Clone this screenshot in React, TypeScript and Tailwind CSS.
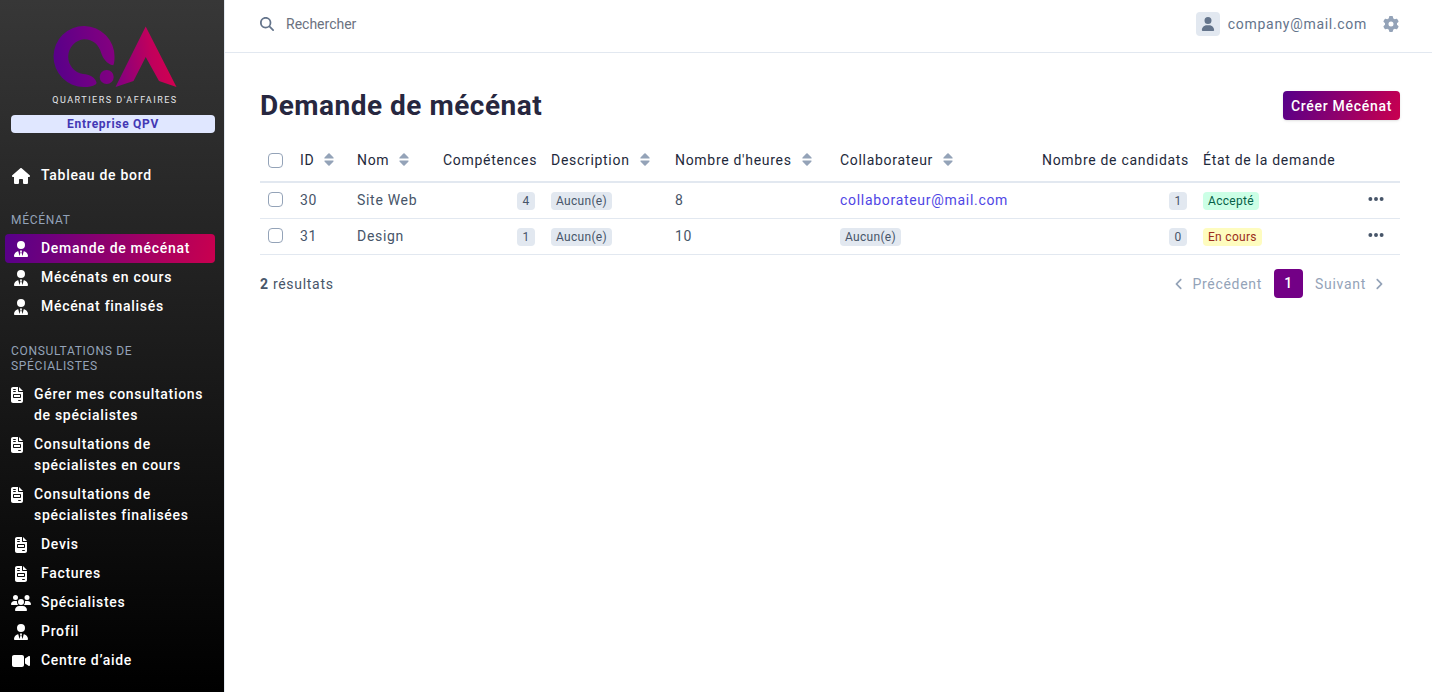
import type { ReactNode } from 'react';
import type { IconType } from 'react-icons';
import {
  FaAngleLeft,
  FaAngleRight,
  FaEllipsis,
  FaFileInvoice,
  FaGear,
  FaHouse,
  FaMagnifyingGlass,
  FaUser,
  FaUserTie,
  FaUsers,
  FaVideo,
} from 'react-icons/fa6';

type MenuItem = { label: string; icon: IconType; iconClass?: string; active?: boolean; long?: boolean };
type MenuSection = { title?: string; items: MenuItem[] };

const menu: MenuSection[] = [
  { items: [{ label: 'Tableau de bord', icon: FaHouse, iconClass: 'size-[18px]' }] },
  {
    title: 'Mécénat',
    items: [
      { label: 'Demande de mécénat', icon: FaUserTie, active: true },
      { label: 'Mécénats en cours', icon: FaUserTie },
      { label: 'Mécénat finalisés', icon: FaUserTie },
    ],
  },
  {
    title: 'Consultations de spécialistes',
    items: [
      { label: 'Gérer mes consultations de spécialistes', icon: FaFileInvoice, long: true },
      { label: 'Consultations de spécialistes en cours', icon: FaFileInvoice, long: true },
      { label: 'Consultations de spécialistes finalisées', icon: FaFileInvoice, long: true },
      { label: 'Devis', icon: FaFileInvoice },
      { label: 'Factures', icon: FaFileInvoice },
      { label: 'Spécialistes', icon: FaUsers, iconClass: 'size-5' },
      { label: 'Profil', icon: FaUserTie },
      { label: 'Centre d’aide', icon: FaVideo, iconClass: 'size-[18px]' },
    ],
  },
];

const columns = [
  { label: 'ID', sortable: true, width: 'w-[57px]' },
  { label: 'Nom', sortable: true, width: 'w-[86px]' },
  { label: 'Compétences', right: true, width: 'w-[108px]' },
  { label: 'Description', sortable: true, width: 'w-[124px]' },
  { label: "Nombre d'heures", sortable: true, width: 'w-[165px]' },
  { label: 'Collaborateur', sortable: true, width: 'w-[202px]' },
  { label: 'Nombre de candidats', right: true, width: 'w-[161px]' },
  { label: 'État de la demande', width: 'w-[148px]' },
];

const rows = [
  {
    id: 30,
    nom: 'Site Web',
    competences: 4,
    heures: 8,
    collaborateur: 'collaborateur@mail.com',
    candidats: 1,
    etat: 'Accepté',
    etatClass: 'bg-[#ccffe6] text-[#065f46]',
  },
  {
    id: 31,
    nom: 'Design',
    competences: 1,
    heures: 10,
    collaborateur: null,
    candidats: 0,
    etat: 'En cours',
    etatClass: 'bg-[#fefcbf] text-[#9b2c1c]',
  },
];

function Badge({ children, className = 'bg-[#e2e8f0] text-[#475569]' }: { children: ReactNode; className?: string }) {
  return (
    <span
      className={`inline-block min-w-[18px] rounded px-[5px] text-center align-middle text-xs leading-[18px] tracking-wide whitespace-nowrap ${className}`}
    >
      {children}
    </span>
  );
}

function SortIcon() {
  return (
    <svg viewBox="0 0 10 13" className="h-[13px] w-2.5 fill-[#94a3b8]" aria-hidden="true">
      <path d="M4.400.5Q5 0 5.600.5L9.300 4.300Q10.200 5.600 8.900 5.600H1.100Q-.2 5.600.7 4.300Z" />
      <path d="M4.400 12.500Q5 13 5.600 12.500L9.300 8.700Q10.200 7.400 8.900 7.400H1.100Q-.2 7.400.7 8.700Z" />
    </svg>
  );
}

function Checkbox({ label }: { label: string }) {
  return (
    <input
      type="checkbox"
      aria-label={label}
      className="block size-[15px] appearance-none rounded border border-[#94a3b8] bg-white checked:bg-[#730086]"
    />
  );
}

function Logo() {
  return (
    <a href="#" className="flex flex-col items-center pt-[26px] pl-1" aria-label="Quartiers d'affaires">
      <svg viewBox="0 0 124 62" className="h-[62px] w-[124px]" aria-hidden="true">
        <defs>
          <linearGradient id="qa" gradientUnits="userSpaceOnUse" x1="0" y1="50" x2="124" y2="30">
            <stop offset="0" stopColor="#56008a" />
            <stop offset="0.5" stopColor="#830080" />
            <stop offset="0.8" stopColor="#c0005c" />
            <stop offset="1" stopColor="#d6004c" />
          </linearGradient>
        </defs>
        <g fill="url(#qa)">
          <path d="M42.500 58.500C39.500 60.600 35.500 61 31 61A30.500 30.500 0 1 1 61.500 31C61.500 34.500 61.300 37 60.300 39.300C53.500 38.200 50 32 48.200 27C46 19 40 13.300 31 13.300A17.500 17.500 0 0 0 30 48C36.500 48 42.500 52 43.500 56.500Q43.700 57.800 42.500 58.500Z" />
          <circle cx="53.700" cy="51" r="7" />
          <path d="M62.500 61L92.700.5L123.500 61L106 55L92.700 31L80.500 55Z" />
        </g>
      </svg>
      <span className="mt-1.5 text-[9px] leading-3 tracking-[1.5px] whitespace-nowrap text-gray-200 uppercase">
        Quartiers d'affaires
      </span>
    </a>
  );
}

function Sidebar() {
  return (
    <aside className="min-h-screen w-[225px] shrink-0 border-r border-[#e2e8f0] bg-linear-to-b/srgb from-[#373737] to-black pr-[9px]">
      <div className="pl-[11px]">
        <Logo />
        <div className="mt-[9px] rounded bg-[#e0e7ff] text-center text-xs leading-[18px] font-bold text-[#4338b4]">
          Entreprise QPV
        </div>
      </div>
      <nav className="pt-7 pb-4 pl-[5px]">
        {menu.map(({ title, items }, i) => (
          <div key={i}>
            {title && (
              <h2 className="px-1.5 pt-[23px] pb-1.5 text-xs leading-[15px] text-[#94a3b8] uppercase">{title}</h2>
            )}
            {items.map(({ label, icon: Icon, iconClass = 'size-4', active, long }) => (
              <a
                key={label}
                href="#"
                className={`flex items-start gap-[11px] rounded px-1.5 py-1 text-sm leading-[21px] font-medium text-white ${
                  active ? 'bg-[linear-gradient(100deg,#56008a,#c9004f)]' : ''
                }`}
              >
                <span className={`flex h-[21px] shrink-0 items-center justify-center ${long ? 'w-3' : 'w-[19px]'}`}>
                  <Icon className={`shrink-0 ${iconClass}`} />
                </span>
                {label}
              </a>
            ))}
          </div>
        ))}
      </nav>
    </aside>
  );
}

export default function App() {
  return (
    <div className="flex min-h-screen bg-white font-['Roboto',sans-serif] text-sm tracking-[0.7px] text-[#475569]">
      <Sidebar />
      <div className="min-w-0 flex-1">
        <header className="flex h-[53px] items-center border-b border-[#e2e8f0] pr-[33px] pb-1 pl-[35px]">
          <label htmlFor="search" className="text-[#64748b]" aria-label="Rechercher">
            <FaMagnifyingGlass size={14} />
          </label>
          <input
            id="search"
            type="search"
            placeholder="Rechercher"
            className="ml-3 min-w-0 flex-1 tracking-normal outline-none placeholder:text-[#6b7280]"
          />
          <button className="flex items-center gap-2 text-[#64748b]">
            <span className="flex size-6 items-center justify-center rounded bg-[#e2e8f0]">
              <FaUser size={14} />
            </span>
            company@mail.com
          </button>
          <button className="ml-4 text-[#94a3b8]" aria-label="Paramètres">
            <FaGear size={16} />
          </button>
        </header>

        <main className="pt-[38px] pr-8 pl-[35px]">
          <div className="flex items-center justify-between">
            <h1 className="text-[28px] leading-[29px] font-bold tracking-[0.5px] text-[#27273f]">Demande de mécénat</h1>
            <button className="h-[29px] rounded bg-[linear-gradient(110deg,#56008a,#c9004f)] px-2 font-medium text-white shadow">
              Créer Mécénat
            </button>
          </div>

          <table className="mt-5 w-full table-fixed text-left">
            <thead>
              <tr className="h-[42px] border-b-2 border-[#e2e8f0] text-[#1e293b]">
                <th className="w-8 pl-2">
                  <Checkbox label="Tout sélectionner" />
                </th>
                {columns.map(({ label, sortable, right, width }) => (
                  <th
                    key={label}
                    className={`px-2 pb-0.5 font-normal whitespace-nowrap ${width} ${right ? 'text-right' : ''}`}
                  >
                    {sortable ? (
                      <a href="#" className="flex items-center gap-2.5">
                        {label}
                        <SortIcon />
                      </a>
                    ) : (
                      label
                    )}
                  </th>
                ))}
                <th className="w-[57px]" aria-label="Actions" />
              </tr>
            </thead>
            <tbody>
              {rows.map((row) => (
                <tr key={row.id} className="h-9 border-b border-[#e2e8f0]">
                  <td className="pb-0.5 pl-2">
                    <Checkbox label={`Sélectionner ${row.nom}`} />
                  </td>
                  <td className="px-2">{row.id}</td>
                  <td className="px-2">{row.nom}</td>
                  <td className="px-2 text-right">
                    <Badge>{row.competences}</Badge>
                  </td>
                  <td className="px-2">
                    <Badge>Aucun(e)</Badge>
                  </td>
                  <td className="px-2">{row.heures}</td>
                  <td className="px-2">
                    {row.collaborateur ? (
                      <a href="#" className="text-[#5046e5]">
                        {row.collaborateur}
                      </a>
                    ) : (
                      <Badge>Aucun(e)</Badge>
                    )}
                  </td>
                  <td className="px-2 text-right">
                    <Badge>{row.candidats}</Badge>
                  </td>
                  <td className="px-2">
                    <Badge className={row.etatClass}>{row.etat}</Badge>
                  </td>
                  <td className="pr-[15px] pb-0.5">
                    <button className="ml-auto block" aria-label="Actions">
                      <FaEllipsis size={18} />
                    </button>
                  </td>
                </tr>
              ))}
            </tbody>
          </table>

          <div className="mt-3.5 flex items-center justify-between">
            <p className="pt-0.5">
              <strong className="font-bold">2</strong> résultats
            </p>
            <nav className="flex items-center gap-3 pr-3.5 text-[#94a3b8]" aria-label="Pagination">
              <a href="#" className="flex items-center gap-1.5 pt-0.5">
                <FaAngleLeft size={14} />
                Précédent
              </a>
              <a href="#" className="flex size-[29px] items-center justify-center rounded bg-[#730086] font-medium text-white">
                1
              </a>
              <a href="#" className="flex items-center gap-1.5 pt-0.5">
                Suivant
                <FaAngleRight size={14} />
              </a>
            </nav>
          </div>
        </main>
      </div>
    </div>
  );
}
